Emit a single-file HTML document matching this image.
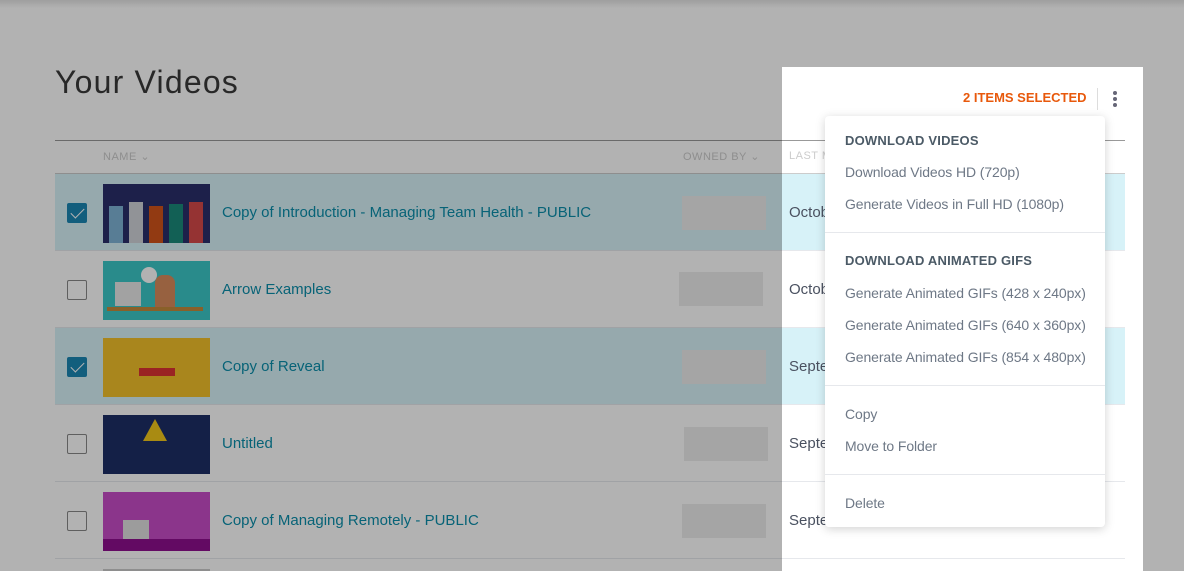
<!DOCTYPE html>
<html style="width:1184px;height:571px;overflow:hidden"><head><meta charset="utf-8"><style>
*{margin:0;padding:0;box-sizing:border-box}
body{width:1184px;height:571px;overflow:hidden;background:#fff;font-family:"Liberation Sans",sans-serif;position:relative}
.abs{position:absolute}
h1{position:absolute;left:55px;top:64px;font-weight:normal;font-size:32px;color:#3a3a3a;letter-spacing:1.2px}
.line{position:absolute;left:55px;width:1070px;height:1px}
.th{position:absolute;top:150px;font-size:11px;color:#ccc;letter-spacing:.5px}
.row{position:absolute;left:55px;width:1070px;height:77px;border-bottom:1px solid #e6e8ec}
.sel{background:#d7f2f8}
.cb{position:absolute;left:12px;top:29px;width:20px;height:20px;border:1px solid #888;border-radius:2px;background:#fff}
.cb.on{background:#1a87b4;border-color:#1a87b4}
.cb.on:after{content:"";position:absolute;left:6px;top:1px;width:6px;height:12px;border:solid #fff;border-width:0 1.5px 1.5px 0;transform:rotate(45deg)}
.th2{position:absolute;left:48px;top:10px;width:107px;height:59px;overflow:hidden}
.nm{position:absolute;left:167px;top:30px;font-size:15px;color:#0b8eab}
.ph{position:absolute;top:22px;width:84px;height:34px;background:#ececec}
.dt{position:absolute;left:734px;top:30px;font-size:15px;color:#4a5160}
.ov{position:absolute;background:rgba(0,0,0,.3)}
.menu{position:absolute;left:825px;top:116px;width:280px;height:411px;background:#fff;border-radius:4px;box-shadow:0 2px 10px rgba(0,0,0,.18)}
.mh{position:absolute;left:20px;font-size:13px;font-weight:bold;color:#4b5a66;letter-spacing:.2px}
.mi{position:absolute;left:20px;font-size:14px;color:#6e7886;letter-spacing:-.1px}
.dv{position:absolute;left:0;width:280px;height:1px;background:#e6e8ec}
</style></head><body>
<h1>Your Videos</h1>
<div class="line" style="top:140px;background:#999"></div>
<div class="th" style="left:103px">NAME ⌄</div>
<div class="th" style="left:683px">OWNED BY ⌄</div>
<div class="th" style="left:789px">LAST MODIFIED</div>
<div class="line" style="top:173px;background:#ccc"></div>

<div class="row sel" style="top:174px">
 <div class="cb on"></div>
 <div class="th2" style="background:#2a2f6a">
  <div class="abs" style="left:6px;top:22px;width:14px;height:37px;background:#7fb3d6"></div>
  <div class="abs" style="left:26px;top:18px;width:14px;height:41px;background:#d0d3d8"></div>
  <div class="abs" style="left:46px;top:22px;width:14px;height:37px;background:#d2531b"></div>
  <div class="abs" style="left:66px;top:20px;width:14px;height:39px;background:#1a8a7a"></div>
  <div class="abs" style="left:86px;top:18px;width:14px;height:41px;background:#d64a4a"></div>
 </div>
 <div class="nm">Copy of Introduction - Managing Team Health - PUBLIC</div>
 <div class="ph" style="left:627px"></div>
 <div class="dt">October</div>
</div>
<div class="row" style="top:251px">
 <div class="cb"></div>
 <div class="th2" style="background:#3cc7c8">
  <div class="abs" style="left:12px;top:21px;width:26px;height:24px;background:#e8e8e8"></div>
  <div class="abs" style="left:38px;top:6px;width:16px;height:16px;border-radius:50%;background:#fff"></div>
  <div class="abs" style="left:52px;top:14px;width:20px;height:32px;background:#d98b5c;border-radius:8px 8px 0 0"></div>
  <div class="abs" style="left:4px;top:46px;width:96px;height:4px;background:#c48a3c"></div>
 </div>
 <div class="nm">Arrow Examples</div>
 <div class="ph" style="left:624px;top:21px"></div>
 <div class="dt">October</div>
</div>
<div class="row sel" style="top:328px">
 <div class="cb on"></div>
 <div class="th2" style="background:#f2c12a">
  <div class="abs" style="left:36px;top:30px;width:36px;height:8px;background:#d33"></div>
 </div>
 <div class="nm">Copy of Reveal</div>
 <div class="ph" style="left:627px"></div>
 <div class="dt">September</div>
</div>
<div class="row" style="top:405px">
 <div class="cb"></div>
 <div class="th2" style="background:#1d2f66">
  <div class="abs" style="left:40px;top:4px;width:0;height:0;border-left:12px solid transparent;border-right:12px solid transparent;border-bottom:22px solid #f2c81a"></div>
 </div>
 <div class="nm">Untitled</div>
 <div class="ph" style="left:629px"></div>
 <div class="dt">September</div>
</div>
<div class="row" style="top:482px">
 <div class="cb"></div>
 <div class="th2" style="background:#c84cc8">
  <div class="abs" style="left:0;top:47px;width:107px;height:12px;background:#8f0f8f"></div>
  <div class="abs" style="left:20px;top:28px;width:26px;height:19px;background:#e0e0e0"></div>
 </div>
 <div class="nm">Copy of Managing Remotely - PUBLIC</div>
 <div class="ph" style="left:627px"></div>
 <div class="dt">September</div>
</div>
<div class="abs" style="left:103px;top:569px;width:107px;height:2px;background:#ccc"></div>

<div class="abs" style="left:963px;top:90px;font-size:13px;font-weight:bold;color:#e8590c">2 ITEMS SELECTED</div>
<div class="abs" style="left:1097px;top:88px;width:1px;height:22px;background:#ddd"></div>
<div class="abs" style="left:1113px;top:91px;width:4px;height:4px;border-radius:50%;background:#667;box-shadow:0 6px 0 #667,0 12px 0 #667"></div>

<div class="ov" style="left:0;top:0;width:1184px;height:67px;background:linear-gradient(rgba(0,0,0,.38),rgba(0,0,0,.3) 8px)"></div>
<div class="ov" style="left:0;top:67px;width:782px;height:504px"></div>
<div class="ov" style="left:1143px;top:67px;width:41px;height:504px"></div>

<div class="menu">
 <div class="mh" style="top:17px">DOWNLOAD VIDEOS</div>
 <div class="mi" style="top:48px">Download Videos HD (720p)</div>
 <div class="mi" style="top:80px">Generate Videos in Full HD (1080p)</div>
 <div class="dv" style="top:116px"></div>
 <div class="mh" style="top:137px">DOWNLOAD ANIMATED GIFS</div>
 <div class="mi" style="top:169px">Generate Animated GIFs (428 x 240px)</div>
 <div class="mi" style="top:201px">Generate Animated GIFs (640 x 360px)</div>
 <div class="mi" style="top:233px">Generate Animated GIFs (854 x 480px)</div>
 <div class="dv" style="top:269px"></div>
 <div class="mi" style="top:290px">Copy</div>
 <div class="mi" style="top:322px">Move to Folder</div>
 <div class="dv" style="top:358px"></div>
 <div class="mi" style="top:379px">Delete</div>
</div>
</body></html>
